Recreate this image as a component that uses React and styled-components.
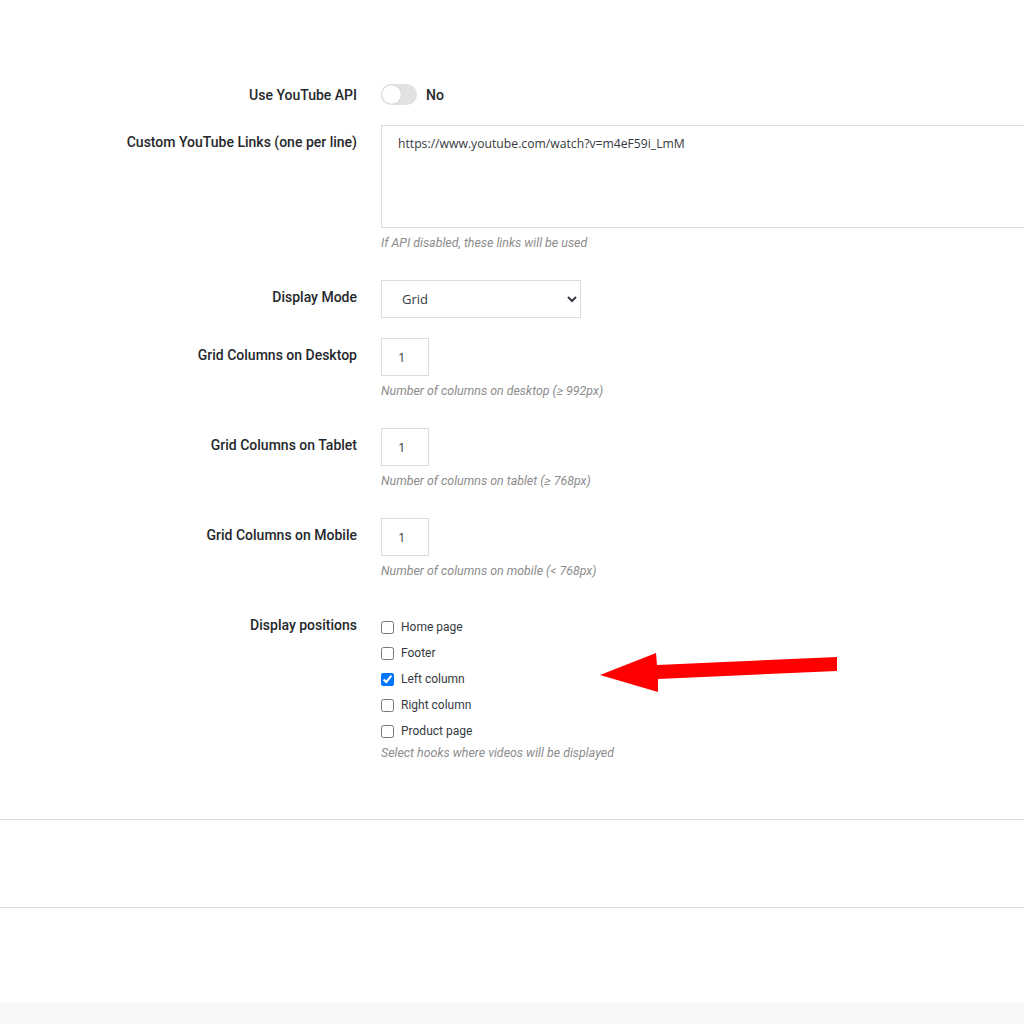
import styled, { createGlobalStyle } from "styled-components";

const GlobalStyle = createGlobalStyle`
  html, body {
    margin: 0;
    padding: 0;
    background: #fff;
    font-family: Roboto, "Noto Sans", sans-serif;
    color: #25282c;
  }
  * {
    box-sizing: border-box;
  }
`;

const Page = styled.div`
  position: relative;
  min-height: 1024px;
  overflow: hidden;
  display: flex;
  flex-direction: column;
`;

const Form = styled.div`
  padding-top: 84px;
  padding-bottom: 29px;
`;

const Row = styled.div`
  display: grid;
  grid-template-columns: 357px 1fr;
  column-gap: 24px;
  margin-bottom: 20px;
  align-items: ${(p) => (p.$center ? "center" : "start")};
`;

const Label = styled.label`
  text-align: right;
  font-size: 14px;
  font-weight: 500;
  line-height: 20px;
  padding-top: ${(p) => (p.$center ? "0" : "7px")};
  color: #25282c;
`;

const Field = styled.div`
  min-width: 0;
`;

const Help = styled.div`
  font-size: 12.4px;
  font-style: italic;
  line-height: 16px;
  color: #8c8c8c;
  margin-top: ${(p) => p.$top ?? 7}px;
  margin-bottom: 9px;
`;

const SwitchWrap = styled.div`
  display: flex;
  align-items: center;
  gap: 9px;
  height: 21px;
`;

const Track = styled.span`
  position: relative;
  display: inline-block;
  width: 36px;
  height: 21px;
  border-radius: 11px;
  background: #e2e2e2;
`;

const Knob = styled.span`
  position: absolute;
  top: 1px;
  left: 1px;
  width: 19px;
  height: 19px;
  border-radius: 50%;
  background: #fff;
  box-shadow: 0 0 1px rgba(0, 0, 0, 0.3);
`;

const SwitchText = styled.span`
  font-size: 14px;
  font-weight: 500;
`;

const TextArea = styled.textarea`
  display: block;
  width: 700px;
  height: 103px;
  padding: 8px 16px;
  border: 1px solid #dcdcdc;
  border-radius: 0;
  resize: none;
  font-family: "Open Sans", sans-serif;
  font-size: 12.2px;
  line-height: 20px;
  color: #363a41;
  outline: none;
`;

const Select = styled.select`
  display: block;
  width: 200px;
  height: 38px;
  padding: 0 10px 0 16px;
  border: 1px solid #dcdcdc;
  border-radius: 0;
  background: #fff;
  font-family: "Open Sans", sans-serif;
  font-size: 13px;
  color: #363a41;
  outline: none;
`;

const NumberInput = styled.input`
  display: block;
  width: 48px;
  height: 38px;
  padding: 0 16px;
  border: 1px solid #dcdcdc;
  border-radius: 0;
  font-family: "Open Sans", sans-serif;
  font-size: 13px;
  color: #363a41;
  outline: none;
`;

const CheckList = styled.div`
  padding-top: 6px;
`;

const CheckRow = styled.label`
  display: flex;
  align-items: center;
  gap: 7px;
  height: 26px;
  font-size: 12px;
  color: #363a41;
`;

const Check = styled.input`
  margin: 0;
  width: 13px;
  height: 13px;
`;

const FooterBar = styled.div`
  height: 89px;
  border-top: 1px solid #dedede;
  border-bottom: 1px solid #dedede;
`;

const Spacer = styled.div`
  flex: 1;
`;

const BottomStrip = styled.div`
  height: 21px;
  background: #f7f7f7;
`;

const Arrow = styled.svg`
  position: absolute;
  left: 596px;
  top: 650px;
`;

const positions = [
  { label: "Home page", checked: false },
  { label: "Footer", checked: false },
  { label: "Left column", checked: true },
  { label: "Right column", checked: false },
  { label: "Product page", checked: false },
];

const columns = [
  { label: "Grid Columns on Desktop", help: "Number of columns on desktop (≥ 992px)" },
  { label: "Grid Columns on Tablet", help: "Number of columns on tablet (≥ 768px)" },
  { label: "Grid Columns on Mobile", help: "Number of columns on mobile (< 768px)" },
];

export default function App() {
  return (
    <>
      <GlobalStyle />
      <Page>
        <Form>
          <Row $center>
            <Label $center>Use YouTube API</Label>
            <SwitchWrap>
              <Track>
                <Knob />
              </Track>
              <SwitchText>No</SwitchText>
            </SwitchWrap>
          </Row>

          <Row>
            <Label>Custom YouTube Links (one per line)</Label>
            <Field>
              <TextArea
                readOnly
                defaultValue="https://www.youtube.com/watch?v=m4eF59i_LmM"
              />
              <Help>If API disabled, these links will be used</Help>
            </Field>
          </Row>

          <Row>
            <Label>Display Mode</Label>
            <Field>
              <Select defaultValue="grid">
                <option value="grid">Grid</option>
                <option value="slider">Slider</option>
              </Select>
            </Field>
          </Row>

          {columns.map((c) => (
            <Row key={c.label}>
              <Label>{c.label}</Label>
              <Field>
                <NumberInput type="text" readOnly defaultValue="1" />
                <Help>{c.help}</Help>
              </Field>
            </Row>
          ))}

          <Row>
            <Label>Display positions</Label>
            <Field>
              <CheckList>
                {positions.map((p) => (
                  <CheckRow key={p.label}>
                    <Check type="checkbox" defaultChecked={p.checked} />
                    {p.label}
                  </CheckRow>
                ))}
              </CheckList>
              <Help $top={1}>Select hooks where videos will be displayed</Help>
            </Field>
          </Row>
        </Form>

        <FooterBar />
        <Spacer />
        <BottomStrip />

        <Arrow width="246" height="46" viewBox="596 650 246 46">
          <polygon
            points="600,675 656,653 657,665 837,657 837,671 658,679 658,692"
            fill="#ff0000"
          />
        </Arrow>
      </Page>
    </>
  );
}
